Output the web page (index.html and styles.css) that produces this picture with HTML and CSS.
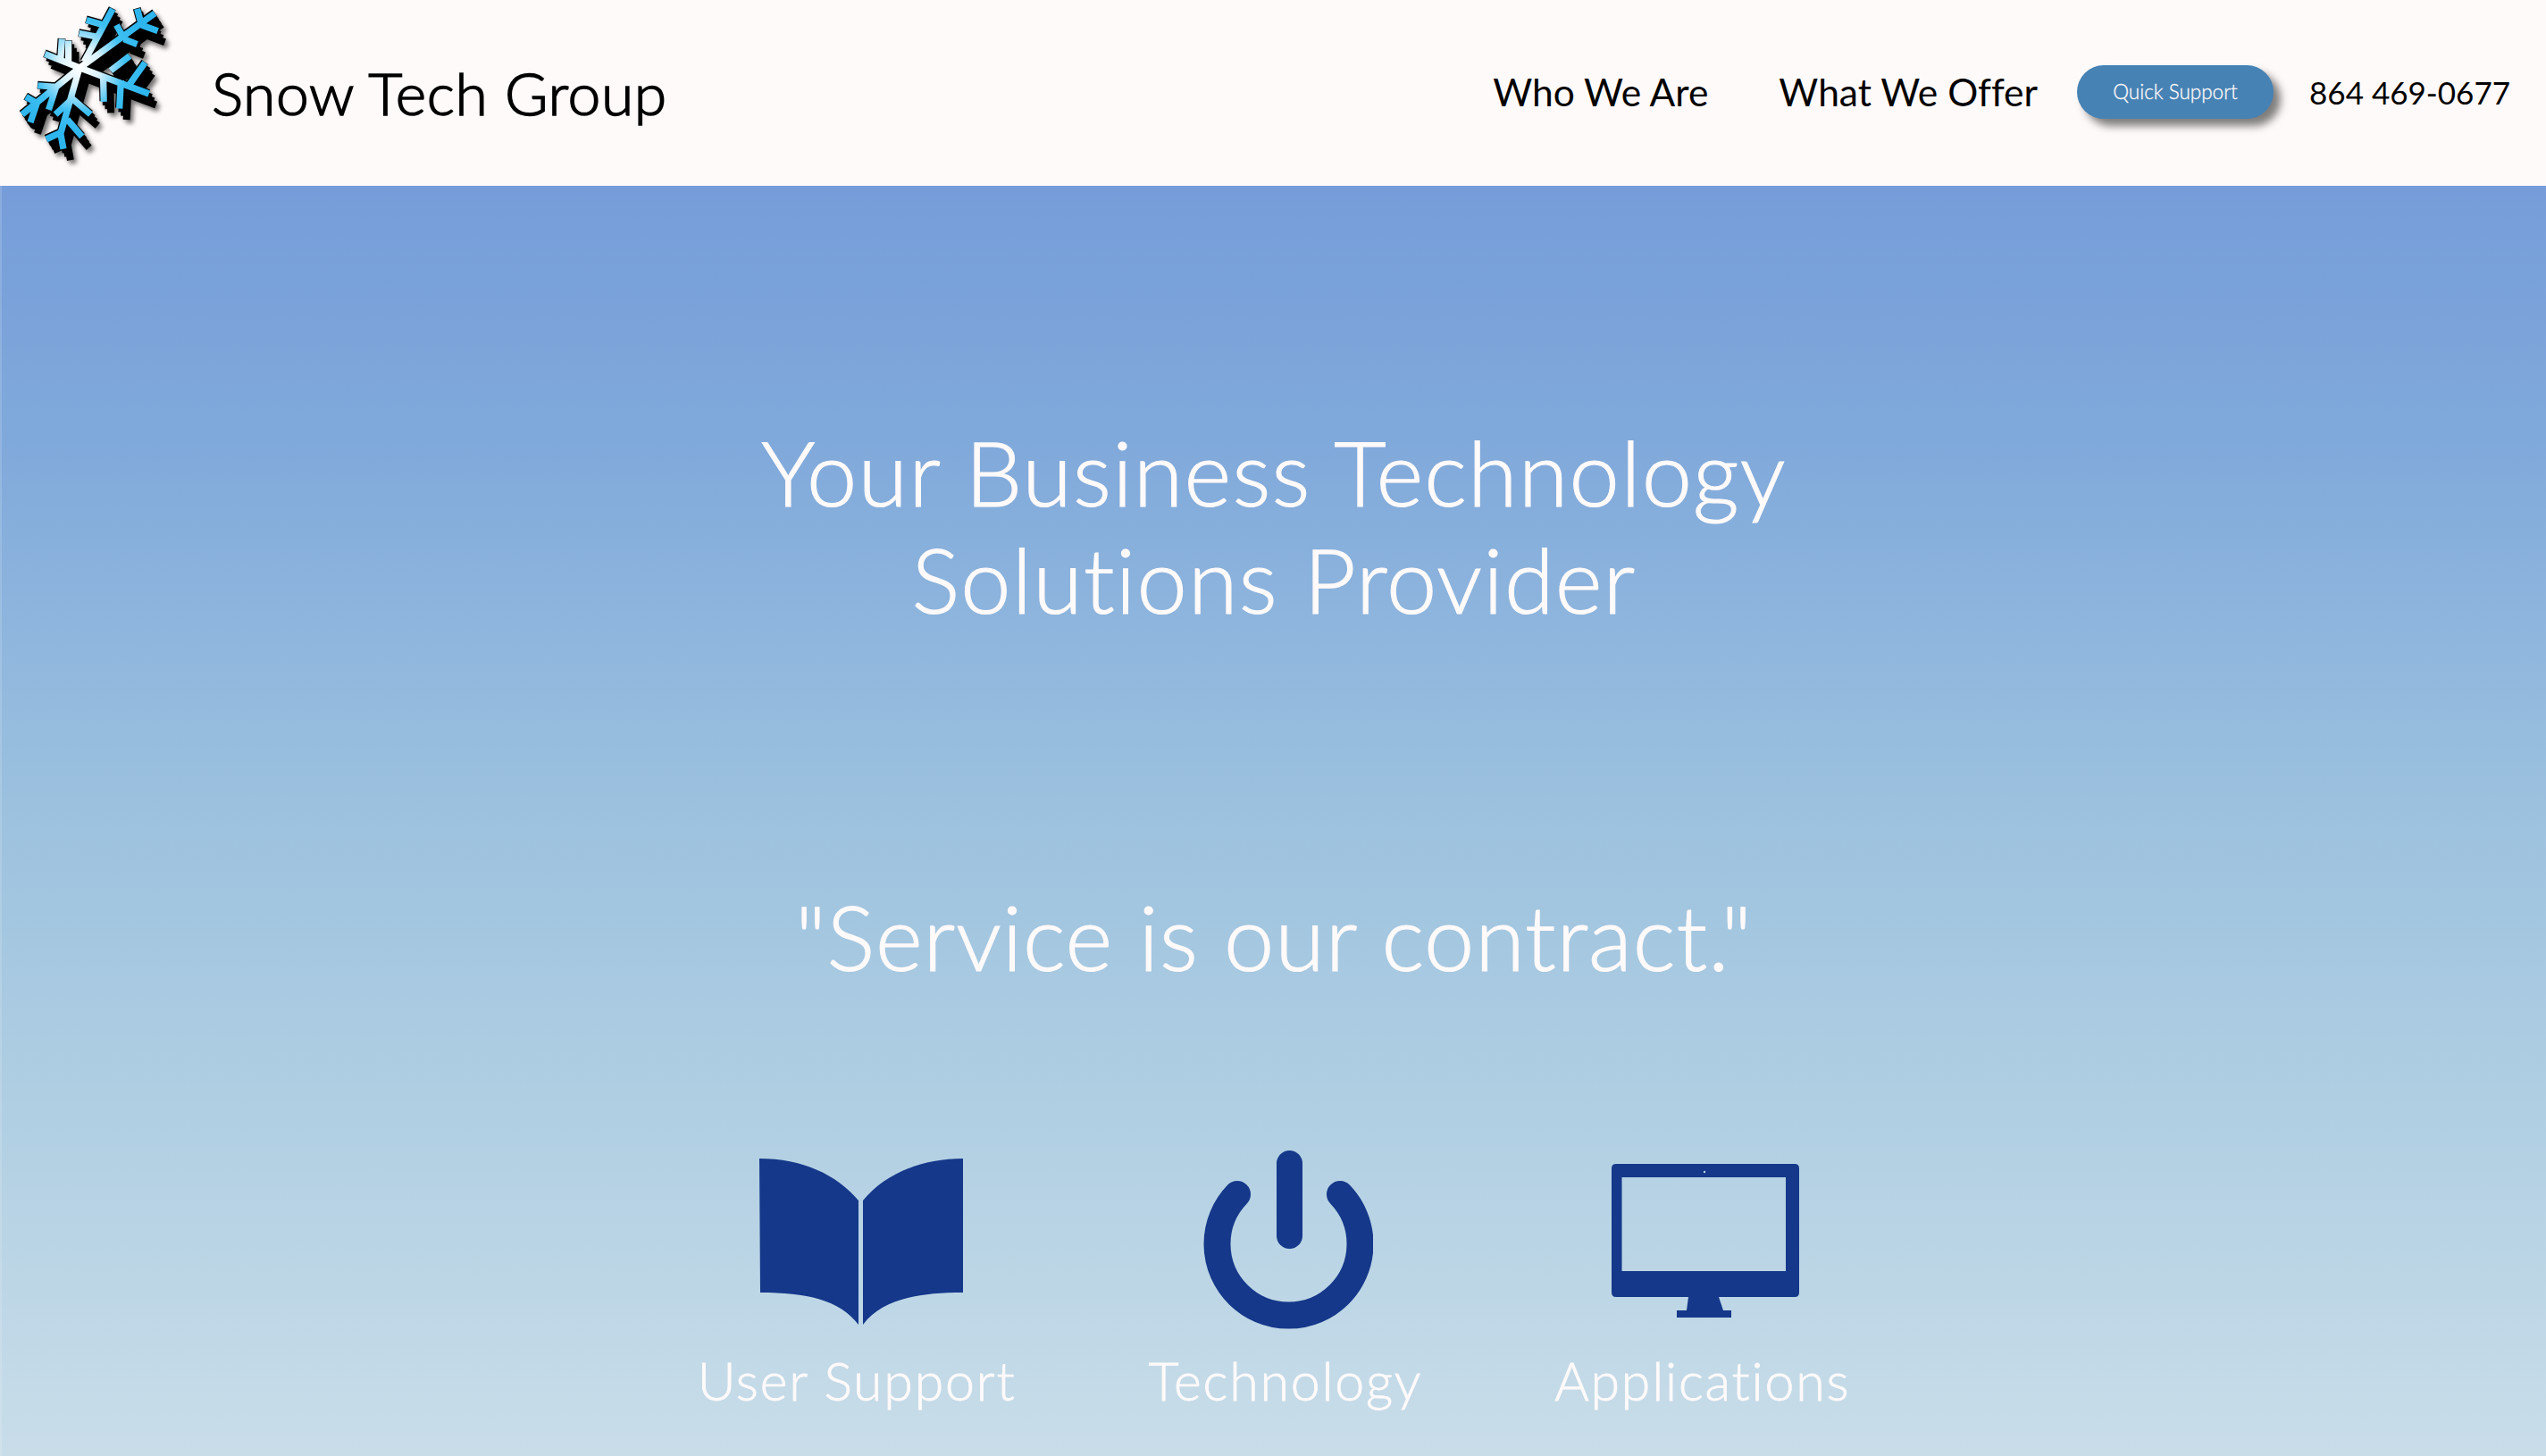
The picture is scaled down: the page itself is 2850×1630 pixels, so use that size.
FILE: index.html
```html
<!DOCTYPE html>
<html lang="en">
<head>
  <meta charset="UTF-8" />
  <title>Snow Tech Group</title>
  <link rel="stylesheet" href="styles.css">
</head>
<body>

<header class="site-header">
  <a class="brand" href="#">
    <svg class="brand-logo" viewBox="0 0 630 630" aria-hidden="true">
      <defs>
        <radialGradient id="flakeFill" gradientUnits="userSpaceOnUse" cx="270" cy="225" r="240">
          <stop offset="0" stop-color="#ffffff"/>
          <stop offset="0.3" stop-color="#d8f2fd"/>
          <stop offset="0.65" stop-color="#3fc0f2"/>
          <stop offset="1" stop-color="#2db5ee"/>
        </radialGradient>
        <path id="flake" d="M270 230L525 45M420 130L395 85M420 132L465 150M480 85L465 30M480 85L535 105
          M285 210L382 30M330 125L268 113M352 85L293 68
          M270 230L152 183M205 208L210 132M232 218L232 138
          M270 230L505 318M350 258L352 345M410 272L405 368M375 240L440 190M440 285L492 212
          M268 235L205 455M245 335L188 388M245 335L307 388M205 450L157 472M205 450L215 505M228 405L278 463
          M270 230L75 388M190 295L128 290M190 295L165 372M125 350L88 328M125 350L103 415"/>
      </defs>
      <g class="flake-all">
        <use href="#flake" class="flake-back" transform="translate(24 38)"/>
        <use href="#flake" class="flake-back" transform="translate(16 25)"/>
        <use href="#flake" class="flake-back" transform="translate(8 12)"/>
        <use href="#flake" class="flake-edge" transform="translate(-1 -2)"/>
        <use href="#flake" class="flake-face"/>
      </g>
    </svg>
    <span class="brand-name">Snow Tech Group</span>
  </a>
  <nav class="site-nav">
    <a class="nav-link" href="#">Who We Are</a>
    <a class="nav-link" href="#">What We Offer</a>
    <a class="support-btn" href="#">Quick Support</a>
    <a class="phone" href="#">864 469-0677</a>
  </nav>
</header>

<main class="hero">
  <h1 class="hero-title">Your Business Technology<br>Solutions Provider</h1>
  <p class="hero-quote">"Service is our contract."</p>

  <div class="features">
    <div class="feature">
      <svg class="icon icon-book" viewBox="0 0 228 186" aria-hidden="true">
        <path d="M0 0C48 0 87 18 111 47V186C90 158 52 150 1 150Z"/>
        <path d="M228 0C180 0 140 18 116 47V186C137 158 176 150 228 150Z"/>
      </svg>
      <span class="feature-label">User Support</span>
    </div>
    <div class="feature">
      <svg class="icon icon-power" viewBox="0 0 190 200" aria-hidden="true">
        <rect x="82" y="0" width="29" height="110" rx="14.5"/>
        <path class="power-ring" d="M38 49A80 80 0 1 0 153 49"/>
      </svg>
      <span class="feature-label">Technology</span>
    </div>
    <div class="feature">
      <svg class="icon icon-monitor" viewBox="0 0 210 172" aria-hidden="true">
        <path fill-rule="evenodd" d="M5 0H205Q210 0 210 5V144Q210 149 205 149H120L125 164H134V172H73V164H84L86 149H5Q0 149 0 144V5Q0 0 5 0ZM11.500 15V120H195V15Z"/>
        <circle class="monitor-cam" cx="104" cy="9" r="1.200"/>
      </svg>
      <span class="feature-label">Applications</span>
    </div>
  </div>
</main>

</body>
</html>
```

FILE: styles.css
```css
html, body {
  margin: 0;
  height: 100%;
}

body {
  display: flex;
  flex-direction: column;
  height: 100vh;
  overflow: hidden;
  background-color: #fffafa;
  font-family: 'Lato', sans-serif;
  font-variant-ligatures: none;
  color: #000;
}

a {
  color: inherit;
  text-decoration: none;
}

/* header */
.site-header {
  display: flex;
  justify-content: space-between;
  align-items: center;
  flex: 0 0 208px;
  padding-right: 40px;
  box-sizing: border-box;
  background-color: #fffafa;
}

.brand {
  display: flex;
  align-items: center;
}

.brand-logo {
  width: 208px;
  height: 208px;
  flex: none;
}

.flake-all {
  filter: drop-shadow(10px 12px 8px rgba(0, 0, 0, 0.55));
}

.flake-all use {
  fill: none;
  stroke-linecap: butt;
  stroke-linejoin: miter;
}

.flake-back {
  stroke: #000;
  stroke-width: 24;
}

.flake-edge {
  stroke: #000;
  stroke-width: 27;
}

.flake-face {
  stroke: url(#flakeFill);
  stroke-width: 22;
}

.brand-name {
  margin-left: 29px;
  font-size: 66px;
  font-weight: 300;
  line-height: 1;
  letter-spacing: 0.6px;
  -webkit-text-stroke: 1.500px #000;
}

.site-nav {
  display: flex;
  align-items: center;
  padding-bottom: 3px;
}

.nav-link {
  margin-right: 79px;
  font-size: 42.500px;
}

.nav-link:nth-child(2) {
  margin-right: 44px;
}

.support-btn {
  display: flex;
  justify-content: center;
  align-items: center;
  width: 220px;
  height: 60px;
  margin-right: 40px;
  border-radius: 30px;
  background-color: #4682b4;
  color: #fffafa;
  font-size: 22.500px;
  font-weight: 300;
  -webkit-text-stroke: 0.300px #fffafa;
  box-shadow: 8px 8px 10px rgba(0, 0, 0, 0.5);
}

.phone {
  font-size: 35px;
}

/* hero */
.hero {
  flex: 1;
  display: flex;
  flex-direction: column;
  align-items: center;
  border-left: 2px solid rgba(255, 255, 255, 0.15);
  background: linear-gradient(180deg, #769dd9 0%, #80a9db 20%, #9dc2df 50%, #b2d0e3 75%, #c9dde9 100%);
  color: #fffafa;
  font-weight: 300;
}

.hero-title {
  margin: 260px 0 0;
  font-size: 101px;
  line-height: 120px;
  font-weight: 300;
  letter-spacing: 1.200px;
  text-align: center;
  -webkit-text-stroke: 1.200px #fffafa;
}

.hero-quote {
  margin: 280px 0 0;
  font-size: 101px;
  line-height: 120px;
  letter-spacing: 0.9px;
  -webkit-text-stroke: 1.200px #fffafa;
}

.features {
  display: flex;
  gap: 148px;
  margin-top: 180px;
}

.feature {
  display: flex;
  flex-direction: column;
  align-items: center;
}

.icon {
  display: block;
  flex: none;
  fill: #15388a;
}

.icon-book {
  width: 228px;
  height: 186px;
  margin: 9px 0 5px 10px;
}

.icon-power {
  width: 190px;
  height: 200px;
  margin-left: 7px;
}

.power-ring {
  fill: none;
  stroke: #15388a;
  stroke-width: 30;
  stroke-linecap: round;
}

.icon-monitor {
  width: 210px;
  height: 172px;
  margin: 15px 0 13px 6px;
}

.monitor-cam {
  fill: #b8d3e4;
}

.feature-label {
  margin-top: 20px;
  font-size: 59px;
  line-height: 76px;
  letter-spacing: 1.8px;
  white-space: nowrap;
  -webkit-text-stroke: 0.800px #fffafa;
}
```
